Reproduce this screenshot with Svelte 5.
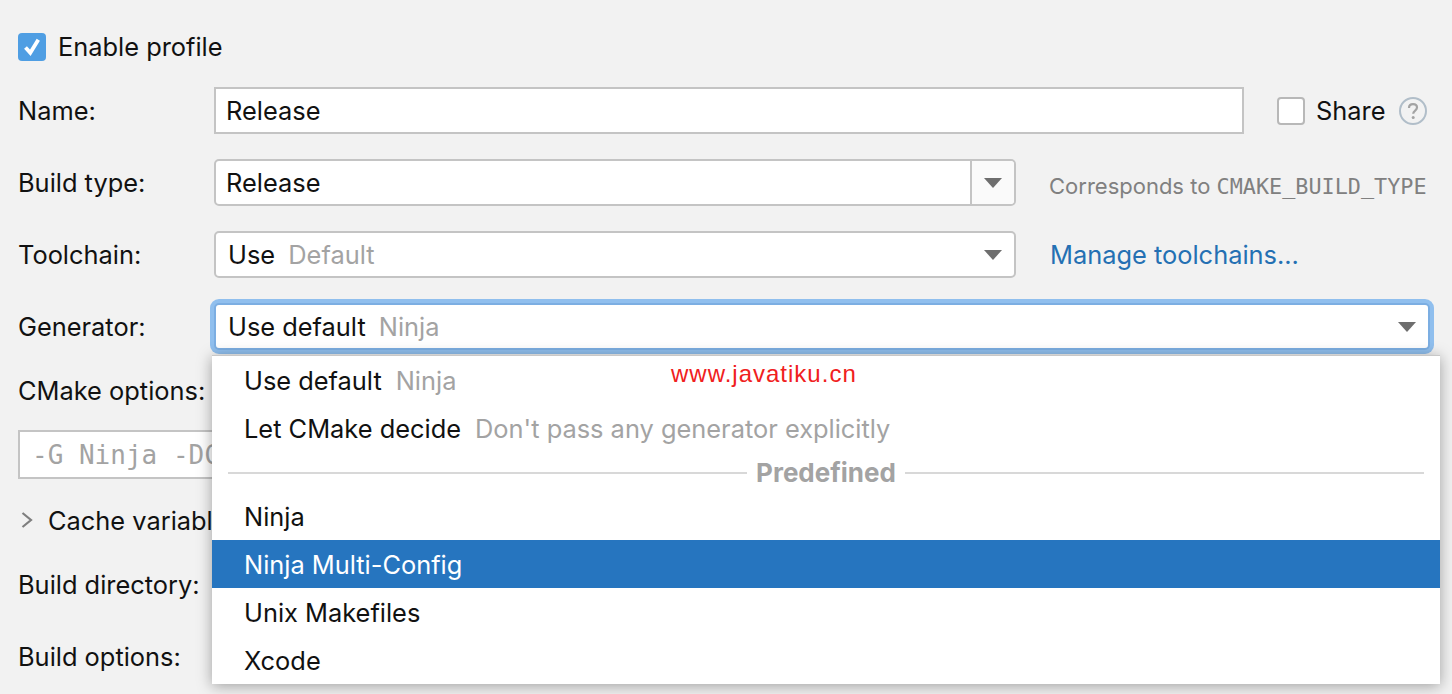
<script>
  const items = [
    { label: "Use default", hint: "Ninja" },
    { label: "Let CMake decide", hint: "Don't pass any generator explicitly" },
  ];
  const predefined = ["Ninja", "Ninja Multi-Config", "Unix Makefiles", "Xcode"];
  const selected = "Ninja Multi-Config";
</script>

<div class="page">
  <label class="enable">
    <span class="check on">
      <svg width="20" height="20" viewBox="0 0 20 20"><path d="M3.500 10.500l4.800 5.300 8-13" fill="none" stroke="#fff" stroke-width="3.800" /></svg>
    </span>
    <span class="enable-text">Enable profile</span>
  </label>

  <div class="row first">
    <span class="label">Name:</span>
    <div class="input name">Release</div>
    <span class="check share-box"></span>
    <span class="share">Share</span>
    <svg class="help" width="30" height="30" viewBox="0 0 30 30">
      <circle cx="15" cy="15" r="13" fill="none" stroke="#b1bec9" stroke-width="2" />
      <path d="M11 12c0-2.600 1.800-3.900 4-3.900s4 1.300 4 3.500c0 3-3.800 3-3.800 6.200" fill="none" stroke="#a3a3a3" stroke-width="2.200" />
      <circle cx="15.200" cy="21.500" r="1.500" fill="#a3a3a3" />
    </svg>
  </div>

  <div class="row">
    <span class="label">Build type:</span>
    <div class="combo editable">
      <span class="value">Release</span>
      <span class="arrow-btn"><span class="arrow"></span></span>
    </div>
    <span class="note">Corresponds to <span class="mono">CMAKE_BUILD_TYPE</span></span>
  </div>

  <div class="row">
    <span class="label">Toolchain:</span>
    <div class="combo">
      <span class="value pad">Use <em>Default</em></span>
      <span class="arrow"></span>
    </div>
    <span class="link">Manage toolchains...</span>
  </div>

  <div class="row">
    <span class="label">Generator:</span>
    <div class="combo focus">
      <span class="value pad">Use default <em>Ninja</em></span>
      <span class="arrow"></span>
    </div>
  </div>

  <div class="label options">CMake options:</div>
  <div class="input args mono">-G Ninja -DCMAKE_BUILD_TYPE=Release</div>

  <div class="cache">
    <svg width="14" height="18" viewBox="0 0 14 18"><path d="M2.500 2l8.500 7-8.500 7" fill="none" stroke="#7f7f7f" stroke-width="2.200" /></svg>
    Cache variables
  </div>

  <div class="label dir">Build directory:</div>
  <div class="label opts">Build options:</div>

  <div class="popup">
    {#each items as item}
      <div class="item"><span>{item.label}</span><em>{item.hint}</em></div>
    {/each}
    <div class="sep"><span>Predefined</span></div>
    {#each predefined as name}
      <div class="item" class:sel={name === selected}><span>{name}</span></div>
    {/each}
    <span class="mark">www.javatiku.cn</span>
  </div>
</div>

<style>
  :global(body) {
    margin: 0;
    background: #f2f2f2;
  }
  .page {
    position: relative;
    box-sizing: border-box;
    height: 694px;
    overflow: hidden;
    padding: 33px 0 0 18px;
    font-family: Inter, "Liberation Sans", sans-serif;
    font-size: 25.4px;
    color: #111;
  }
  em {
    font-style: normal;
    color: #a3a3a3;
    margin-left: 6px;
  }
  .enable {
    display: flex;
    align-items: center;
    gap: 12px;
    height: 28px;
  }
  .enable-text {
    margin-top: -1px;
  }
  .check {
    box-sizing: border-box;
    display: flex;
    align-items: center;
    justify-content: center;
    width: 28px;
    height: 28px;
    border-radius: 4px;
  }
  .check.on {
    background: #4f9ee3;
  }
  .share-box {
    background: #fff;
    border: 2px solid #b8b8b8;
    margin-left: 33px;
  }
  .row {
    display: flex;
    align-items: center;
    height: 47px;
    margin-top: 25px;
  }
  .row.first {
    margin-top: 26px;
  }
  .label {
    flex: none;
    width: 196px;
  }
  .input,
  .combo {
    box-sizing: border-box;
    display: flex;
    align-items: center;
    height: 47px;
    background: #fff;
    border: 2px solid #c4c4c4;
  }
  .input {
    padding-left: 10px;
  }
  .name {
    width: 1030px;
  }
  .share {
    margin-left: 11px;
  }
  .help {
    margin-left: 12px;
  }
  .combo {
    width: 802px;
    border-radius: 5px;
    justify-content: space-between;
    padding-right: 12px;
  }
  .value {
    padding-left: 10px;
  }
  .value.pad {
    padding-left: 12px;
  }
  .editable {
    padding-right: 0;
  }
  .arrow-btn {
    box-sizing: border-box;
    display: flex;
    align-items: center;
    justify-content: center;
    width: 44px;
    height: 100%;
    background: #fafafa;
    border-left: 2px solid #c4c4c4;
    border-radius: 0 4px 4px 0;
  }
  .arrow {
    width: 0;
    height: 0;
    border-left: 9px solid transparent;
    border-right: 9px solid transparent;
    border-top: 10px solid #6e6e6e;
  }
  .note {
    margin-left: 33px;
    padding-top: 7px;
    font-size: 22px;
    color: #808080;
    white-space: nowrap;
  }
  .mono {
    font-family: "DejaVu Sans Mono", "Liberation Mono", monospace;
  }
  .note .mono {
    font-size: 21.800px;
  }
  .link {
    margin-left: 34px;
    color: #2470b3;
  }
  .focus {
    width: 1216px;
    border-color: #7caee2;
    box-shadow: 0 0 0 4px #90bfee;
    border-radius: 5px;
  }
  .options {
    margin-top: 26px;
    height: 30px;
    line-height: 30px;
  }
  .args {
    box-sizing: border-box;
    width: 1000px;
    height: 49px;
    margin-top: 24px;
    padding-left: 12px;
    font-size: 26px;
    white-space: nowrap;
    overflow: hidden;
    color: #a3a3a3;
  }
  .cache {
    display: flex;
    align-items: center;
    gap: 14px;
    height: 30px;
    margin-top: 26px;
    padding-left: 2px;
  }
  .dir {
    margin-top: 35px;
    height: 30px;
    line-height: 30px;
    width: auto;
  }
  .opts {
    margin-top: 42px;
    height: 30px;
    line-height: 30px;
    width: auto;
  }
  .popup {
    position: absolute;
    left: 212px;
    top: 355px;
    width: 1228px;
    height: 329px;
    box-sizing: border-box;
    background: #fff;
    border-top: 1px solid #c8c8c8;
    box-shadow: 0 2px 14px rgba(0, 0, 0, 0.35);
  }
  .item {
    display: flex;
    align-items: center;
    height: 48px;
    padding-left: 32px;
  }
  .item em {
    margin-left: 14px;
  }
  .item.sel {
    background: #2675bf;
    color: #fff;
  }
  .sep {
    display: flex;
    align-items: center;
    gap: 9px;
    height: 39px;
    padding-top: 1px;
    margin: 0 16px;
    font-size: 26px;
    font-weight: 700;
    color: #a3a3a3;
  }
  .sep span {
    margin-top: -1px;
  }
  .sep::before,
  .sep::after {
    content: "";
    flex: 1;
    height: 2px;
    background: #d8d8d8;
  }
  .mark {
    position: absolute;
    left: 459px;
    top: 4px;
    color: #f02020;
    font-family: "Liberation Sans", sans-serif;
    font-size: 24px;
    letter-spacing: 1px;
  }
</style>
